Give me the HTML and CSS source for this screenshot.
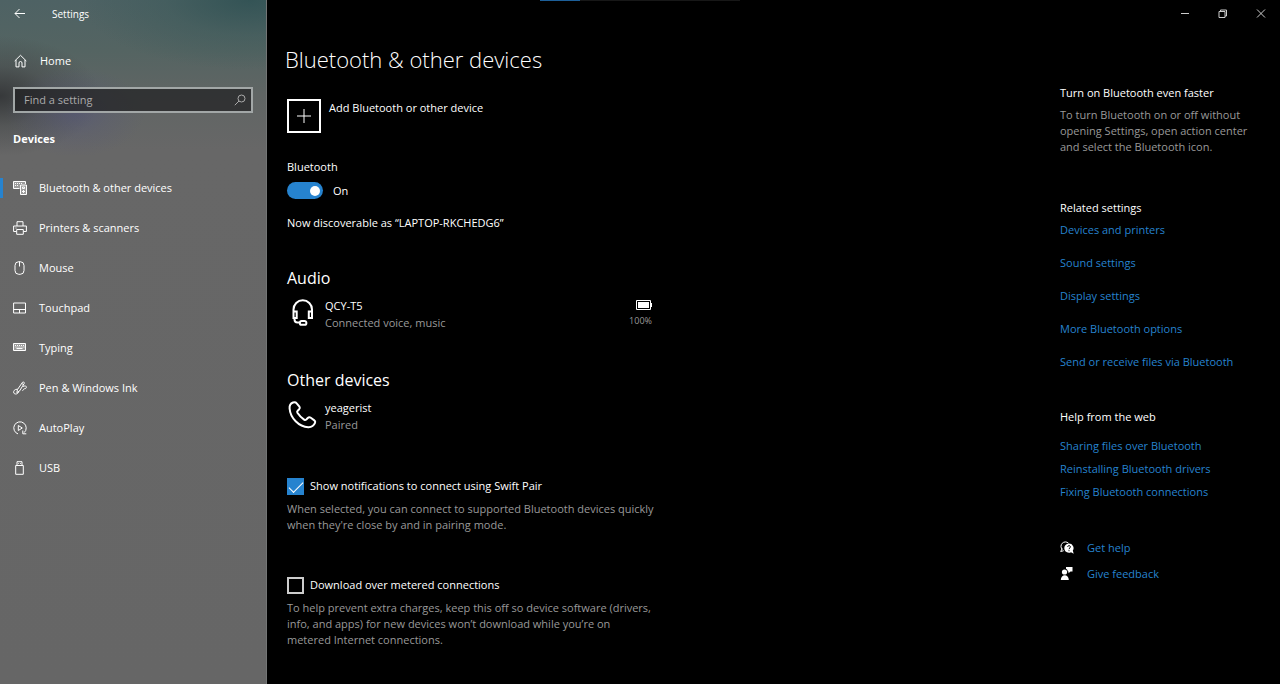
FILE: index.html
```html
<!DOCTYPE html>
<html lang="en">
<head>
    <meta charset="UTF-8">
    <meta name="viewport" content="width=device-width, initial-scale=1.0">
    <title>Settings</title>
    <link rel="stylesheet" href="styles.css">
</head>
<body>
    <div class="loading-bar"><span></span></div>

    <aside class="sidebar">
        <header class="sidebar-top">
            <button class="back" type="button" aria-label="Back">
                <svg width="12" height="12" viewBox="0 0 12 12"><path d="M11 5.500H1M5.500 1L1 5.500l4.500 4.500"/></svg>
            </button>
            <span>Settings</span>
        </header>

        <a class="home" href="#">
            <svg width="14" height="14" viewBox="0 0 14 14"><path d="M.7 7L6.500 1.300 12.300 7M2 6v6.900h3V9a1.500 1.500 0 0 1 3 0v3.900h3V6"/></svg>
            Home
        </a>

        <form class="search">
            <input type="text" placeholder="Find a setting" aria-label="Find a setting">
            <button type="button" aria-label="Search">
                <svg width="12" height="12" viewBox="0 0 12 12"><circle cx="7.500" cy="4.500" r="3.500"/><path d="M5 7L.8 11.200"/></svg>
            </button>
        </form>

        <h2>Devices</h2>

        <nav>
            <a class="active" href="#">
                <svg width="14" height="14" viewBox="0 0 14 14"><path class="shade" d="M.5 .5h12v3H7v4H.5z"/><path d="M6.500 7.500H.5v-7h12V3M2 2.500h1M4 2.500h1M6 2.500h1M8 2.500h1M2 4.500h1M4 4.500h1"/><path class="shade" d="M7.500 4h6v9.500h-6z"/><path d="M7.500 4h6v9.500h-6zM9.500 6h2v1.500h-2zM9 10.500h3M10.500 9v3"/></svg>
                Bluetooth &amp; other devices
            </a>
            <a href="#">
                <svg width="14" height="14" viewBox="0 0 14 14"><path d="M4 5V.7h6V5M3.500 10.500H.6V5h12.800v5.500h-2.900M3.700 8.500h6.600v4.800H3.700zM2.500 7h1"/></svg>
                Printers &amp; scanners
            </a>
            <a href="#">
                <svg width="14" height="14" viewBox="0 0 14 14"><rect x="2" y=".7" width="9" height="12.600" rx="3.800"/><path d="M6.500 .7v4.800"/></svg>
                Mouse
            </a>
            <a href="#">
                <svg width="14" height="14" viewBox="0 0 14 14"><path d="M.6 2h11.900v10H.6zM.6 8.500h11.900M6.500 8.500V12"/></svg>
                Touchpad
            </a>
            <a href="#">
                <svg width="14" height="14" viewBox="0 0 14 14"><path class="shade" d="M.5 2.500h12v7H.5z"/><path d="M.5 2.500h12v7H.5z"/><path d="M2 4.500h9.500M2.500 6h9" stroke-dasharray="1 1"/><path d="M3.500 7.500h6"/></svg>
                Typing
            </a>
            <a href="#">
                <svg width="14" height="14" viewBox="0 0 14 14"><path d="M4.500 8.500l5-7.200c.7-.9 2.300.1 1.700 1.200L6.500 10l-2.700 1.700zM8.800 2.500l2 1.300M4.600 8.200C1.500 8 .1 10.200.8 12c.8 1.700 4.800 1.400 5-2M10 5.500c3-1.500 4 .3 3 1.700-.7.800-1.700.3-2.200.8s-.3 1.500-1.300 1.500"/></svg>
                Pen &amp; Windows Ink
            </a>
            <a href="#">
                <svg width="14" height="14" viewBox="0 0 14 14"><path d="M5 12.900A6.200 6.200 0 1 1 11.200 11.600M13.300 12.800H9.800V9.500M5.300 4.500v5L9.300 7z"/></svg>
                AutoPlay
            </a>
            <a href="#">
                <svg width="14" height="14" viewBox="0 0 14 14"><path d="M2.700 4.500h7.600v8.800H2.700zM4 4.500V.7h5v3.800M5.300 2.500h.8M7 2.500h.8"/></svg>
                USB
            </a>
        </nav>
    </aside>

    <div class="window">
        <div class="window-controls">
            <button type="button" aria-label="Minimize">
                <svg width="10" height="10" viewBox="0 0 10 10"><path d="M1 4.500h8"/></svg>
            </button>
            <button type="button" aria-label="Restore">
                <svg width="10" height="10" viewBox="0 0 10 10"><path d="M1 2.500h6v6H1zM2.500 2.500V1h6v6H7"/></svg>
            </button>
            <button type="button" aria-label="Close">
                <svg width="10" height="10" viewBox="0 0 10 10"><path d="M1 .5l8 8M9 .5l-8 8"/></svg>
            </button>
        </div>

        <div class="page">
            <main>
                <h1>Bluetooth &amp; other devices</h1>

                <button class="add-device" type="button">
                    <span class="plus">
                        <svg width="14" height="14" viewBox="0 0 14 14"><path d="M7 0v14M0 7h14"/></svg>
                    </span>
                    Add Bluetooth or other device
                </button>

                <label class="toggle-label" for="bluetooth">Bluetooth</label>
                <div class="toggle-row">
                    <input class="toggle" type="checkbox" id="bluetooth" checked>
                    <span>On</span>
                </div>
                <p class="discoverable">Now discoverable as “LAPTOP-RKCHEDG6”</p>

                <section class="devices">
                    <h2>Audio</h2>
                    <div class="device">
                        <svg width="32" height="32" viewBox="0 0 32 32"><path d="M6.500 16v-3.500a9 9 0 0 1 18.500 0V16M6.500 14.500h3.200v6.500H6.500zM21.800 14.500H25v6.500h-3.200zM7.500 21v1.500a3 3 0 0 0 3 3h2M14.700 24h2.800a1.700 1.700 0 0 1 0 3.800h-2.800a1.900 1.900 0 0 1 0-3.800z"/></svg>
                        <div class="device-text">
                            <p>QCY-T5</p>
                            <p class="muted">Connected voice, music</p>
                        </div>
                        <div class="battery">
                            <svg width="16" height="10" viewBox="0 0 16 10"><path d="M.5 .5h14v9H.5z"/><path class="fill" d="M2 2h11v6H2zM15 3h1v4h-1z"/></svg>
                            <span>100%</span>
                        </div>
                    </div>
                </section>

                <section class="devices">
                    <h2>Other devices</h2>
                    <div class="device">
                        <svg width="32" height="32" viewBox="0 0 32 32"><path d="M6 3.500C3.500 4.500 2.300 6.500 2.600 9.500c.7 9.500 9.200 18.200 18.700 18.700 3.500.1 5.800-2 6.800-4.500.3-.8 0-1.700-.8-2.300l-3.500-2.600c-1-.7-2.200-.6-3 .2l-1.500 1.500c-.7.6-1.500.6-2.200.1-2.800-2-5-4.100-6.700-6.800-.4-.7-.3-1.500.3-2.100l1.500-1.500c.7-.8.8-1.800.2-2.700L9.500 4.200c-.8-1.100-2.200-1.200-3.500-.7z"/></svg>
                        <div class="device-text">
                            <p>yeagerist</p>
                            <p class="muted">Paired</p>
                        </div>
                    </div>
                </section>

                <div class="option">
                    <input type="checkbox" id="swift-pair" checked>
                    <label for="swift-pair">Show notifications to connect using Swift Pair</label>
                    <p class="muted">When selected, you can connect to supported Bluetooth devices quickly when they're close by and in pairing mode.</p>
                </div>

                <div class="option">
                    <input type="checkbox" id="metered">
                    <label for="metered">Download over metered connections</label>
                    <p class="muted">To help prevent extra charges, keep this off so device software (drivers, info, and apps) for new devices won’t download while you’re on metered Internet connections.</p>
                </div>
            </main>

            <aside class="related">
                <h3>Turn on Bluetooth even faster</h3>
                <p class="muted">To turn Bluetooth on or off without opening Settings, open action center and select the Bluetooth icon.</p>

                <h3>Related settings</h3>
                <ul class="links spaced">
                    <li><a href="#">Devices and printers</a></li>
                    <li><a href="#">Sound settings</a></li>
                    <li><a href="#">Display settings</a></li>
                    <li><a href="#">More Bluetooth options</a></li>
                    <li><a href="#">Send or receive files via Bluetooth</a></li>
                </ul>

                <h3>Help from the web</h3>
                <ul class="links web">
                    <li><a href="#">Sharing files over Bluetooth</a></li>
                    <li><a href="#">Reinstalling Bluetooth drivers</a></li>
                    <li><a href="#">Fixing Bluetooth connections</a></li>
                </ul>

                <ul class="links support">
                    <li>
                        <svg width="14" height="14" viewBox="0 0 14 14"><path class="line" d="M2.300 8.500A4.300 4.300 0 1 1 8.500 2.200M2.200 7.500L.7 10.500l3-.8"/><path d="M9 2.500a4.600 4.600 0 1 0 2 8.700l2.700 1.600-.9-3.200A4.600 4.600 0 0 0 9 2.500z"/><path class="mark" d="M7.700 6c0-2 2.900-1.700 2.700 0C10.300 7 9 7 9 8.200M9 9.200v1"/></svg>
                        <a href="#">Get help</a>
                    </li>
                    <li>
                        <svg width="14" height="14" viewBox="0 0 14 14"><circle cx="4.500" cy="5" r="2.600"/><path d="M.8 13c0-6.500 8-6.500 8 0zM6 0h6.500v4.500h-2L8.500 6.200V4.500H7.800C7.800 3 7 2.300 6 1.800z"/></svg>
                        <a href="#">Give feedback</a>
                    </li>
                </ul>
            </aside>
        </div>
    </div>
</body>
</html>
```

FILE: styles.css
```css
* {
    box-sizing: border-box;
}

body {
    display: flex;
    min-height: 100vh;
    margin: 0;
    background: #000;
    color: #fff;
    font-family: "Open Sans", "Noto Sans", sans-serif;
    font-size: 11px;
    line-height: 16px;
}

h1, h2, h3, p, ul {
    margin: 0;
    padding: 0;
    font-size: 11px;
    font-weight: 400;
}

ul {
    list-style: none;
}

a {
    color: inherit;
    text-decoration: none;
}

button, input {
    padding: 0;
    border: none;
    background: none;
    color: inherit;
    font: inherit;
}

svg {
    flex: none;
    fill: none;
    stroke: currentColor;
}

.muted {
    color: #999;
}

/* Thin bar on the top edge */
.loading-bar {
    position: absolute;
    top: 0;
    left: 50%;
    width: 200px;
    height: 1px;
    margin-left: -100px;
    background: #171717;
}

.loading-bar span {
    display: block;
    width: 20%;
    height: 1px;
    background: #1d5f99;
}

/* Sidebar */
.sidebar {
    flex: none;
    width: 267px;
    border-right: 1px solid #737575;
    background:
        radial-gradient(ellipse 70px 45px at 75px 112px, rgba(80, 82, 125, 0.5), rgba(80, 82, 125, 0.2) 50%, rgba(80, 82, 125, 0)),
        radial-gradient(ellipse 100px 60px at 0 96px, rgba(50, 52, 54, 0.9), rgba(60, 62, 64, 0.4) 50%, rgba(70, 72, 74, 0)),
        radial-gradient(ellipse 170px 70px at 250px 0, rgba(45, 80, 82, 0.8), rgba(55, 88, 88, 0.4) 50%, rgba(75, 96, 96, 0)),
        linear-gradient(#4e6264, #546462 50px, #606564 95px, #676767 150px, #666);
}

.sidebar-top {
    display: flex;
    align-items: center;
    gap: 26px;
    height: 28px;
    padding-left: 14px;
    font-size: 10px;
}

.back {
    display: flex;
}

.home {
    display: flex;
    align-items: center;
    gap: 12px;
    height: 20px;
    margin: 23px 0 16px 14px;
}

.search {
    display: flex;
    align-items: center;
    height: 26px;
    margin: 0 13px;
    padding: 0 5px 0 9px;
    border: 2px solid #a2a7a7;
    background: rgba(30, 30, 31, 0.7);
}

.search input {
    flex: 1;
    min-width: 0;
    outline: none;
}

.search input::placeholder {
    color: #aaa;
    opacity: 1;
}

.search button {
    display: flex;
    color: #aaa;
}

.sidebar h2 {
    margin: 18px 13px 21px;
    font-weight: 700;
}

nav a {
    display: flex;
    align-items: center;
    gap: 12px;
    height: 40px;
    padding-left: 13px;
}

nav a.active {
    padding-left: 10px;
}

nav a.active::before {
    content: "";
    width: 3px;
    height: 20px;
    margin: 0 -2px 0 -10px;
    background: #2683cf;
}

nav .shade {
    fill: rgba(255, 255, 255, 0.35);
    stroke: none;
}

/* Window */
.window {
    flex: 1;
    min-width: 0;
}

.window-controls {
    display: flex;
    justify-content: flex-end;
    height: 28px;
}

.window-controls button {
    display: flex;
    align-items: center;
    justify-content: center;
    width: 38px;
    color: #ccc;
}

.page {
    display: flex;
    justify-content: space-between;
    gap: 40px;
    padding: 16px 20px 36px;
}

main {
    flex: 0 1 374px;
}

h1 {
    margin-left: -2px;
    font-size: 22px;
    font-weight: 300;
    line-height: 30px;
}

.add-device {
    display: flex;
    gap: 8px;
    margin: 25px 0 26px;
    line-height: 18px;
}

.plus {
    display: flex;
    align-items: center;
    justify-content: center;
    width: 34px;
    height: 34px;
    border: 2px solid #fff;
}

.toggle-label {
    display: block;
}

.toggle-row {
    display: flex;
    align-items: center;
    gap: 10px;
    margin: 7px 0 16px;
}

.toggle {
    appearance: none;
    display: flex;
    align-items: center;
    justify-content: flex-end;
    width: 36px;
    height: 17px;
    margin: 0;
    padding-right: 3px;
    border-radius: 9px;
    background: #2683cf;
}

.toggle::before {
    content: "";
    width: 10px;
    height: 10px;
    border-radius: 50%;
    background: #fff;
}

.toggle:not(:checked) {
    justify-content: flex-start;
    background: #555;
}

.discoverable {
    margin-bottom: 36px;
}

/* Device lists */
.devices {
    margin-bottom: 38px;
}

.devices h2 {
    margin-bottom: 8px;
    font-size: 16px;
    line-height: 22px;
}

.device {
    display: flex;
    gap: 6px;
    line-height: 17px;
}

.device > svg {
    stroke-width: 2;
}

.device-text {
    flex: 1;
}

.battery {
    display: flex;
    flex-direction: column;
    align-items: flex-end;
    gap: 2px;
    margin-right: 9px;
    padding-top: 3px;
    font-size: 9px;
}

.battery span {
    color: #999;
}

.battery .fill {
    fill: #fff;
    stroke: none;
}

/* Options with a tick box */
.option {
    display: grid;
    grid-template-columns: 17px 1fr;
    align-items: center;
    gap: 6px;
    margin-top: 43px;
}

.devices + .option {
    margin-top: 44px;
}

.option input {
    appearance: none;
    width: 17px;
    height: 17px;
    margin: 0;
    border: 2px solid #ccc;
}

.option input:checked {
    border: none;
    background: #2683cf;
}

.option input:checked::before {
    content: "";
    display: block;
    width: 13px;
    height: 6px;
    margin: 4px 0 0 2px;
    border: solid #fff;
    border-width: 0 0 1px 1px;
    transform: rotate(-45deg);
}

.option label {
    line-height: 18px;
}

.option p {
    grid-column: 1 / -1;
    margin-right: 4px;
}

/* Right column */
.related {
    flex: 0 0 200px;
    padding-top: 41px;
}

.related h3 {
    margin-bottom: 6px;
}

.related > p {
    margin-bottom: 45px;
}

.links {
    display: flex;
    flex-direction: column;
    gap: 7px;
}

.links a {
    color: #2683cf;
}

.spaced {
    gap: 17px;
    margin-bottom: 39px;
}

.web {
    padding-top: 7px;
}

.support {
    gap: 10px;
    margin-top: 40px;
}

.support li {
    display: flex;
    align-items: center;
    gap: 13px;
}

.support svg {
    fill: #fff;
    stroke: none;
}

.support .line {
    fill: none;
    stroke: #fff;
}

.support .mark {
    fill: none;
    stroke: #000;
}
```
